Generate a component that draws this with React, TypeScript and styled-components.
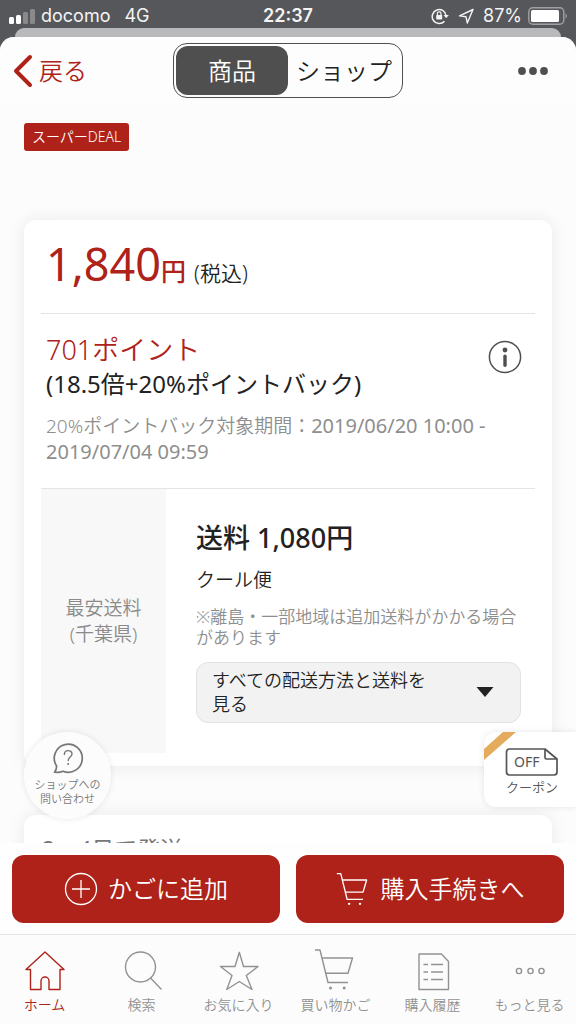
import React, { useState } from "react";
import styled, { createGlobalStyle } from "styled-components";

const red = "#ae2219";
const charcoal = "#4f4f4f";
const line = "#e4e4e4";

const GlobalStyle = createGlobalStyle`
  *, *::before, *::after { box-sizing: border-box; }
  body {
    margin: 0;
    background: #56575b;
    color: #222;
    font-family: "Noto Sans", "Noto Sans CJK JP", sans-serif;
    font-weight: 350;
  }
  button { font: inherit; color: inherit; border: 0; margin: 0; padding: 0; background: none; cursor: pointer; }
  a { color: inherit; text-decoration: none; }
  p, h1, h2 { margin: 0; font-weight: inherit; font-size: inherit; }
  svg { display: block; flex: none; }
`;

const Shell = styled.div`
  height: 100vh;
  display: flex;
  flex-direction: column;
`;

const StatusBar = styled.div`
  height: 28px;
  flex: none;
  display: grid;
  grid-template-columns: 1fr auto 1fr;
  align-items: center;
  padding: 4px 8px 0;
  color: #f4f4f4;
  font-family: Inter, sans-serif;
  font-size: 18px;
  font-weight: 400;
  line-height: 24px;
`;

const StatusGroup = styled.div<{ $end?: boolean }>`
  display: flex;
  align-items: center;
  gap: 6px;
  justify-content: ${(p) => (p.$end ? "flex-end" : "flex-start")};
`;

const Network = styled.span`
  margin-left: 8px;
`;

const Clock = styled.span`
  font-weight: 600;
`;

const BackSheet = styled.div`
  height: 9px;
  flex: none;
  margin: 0 15px;
  border-radius: 12px 12px 0 0;
  background: #b9b9bb;
`;

const Sheet = styled.div`
  flex: 1;
  min-height: 0;
  display: flex;
  flex-direction: column;
  border-radius: 14px 14px 0 0;
  background: #fcfcfc;
  overflow: hidden;
`;

const Header = styled.header`
  flex: none;
  display: grid;
  grid-template-columns: 1fr auto 1fr;
  align-items: center;
  height: 67px;
  padding: 0 13px;
  background: #fdfdfd;
`;

const BackButton = styled.button`
  display: flex;
  align-items: center;
  gap: 6px;
  justify-self: start;
  color: ${red};
  font-size: 24px;
  line-height: 36px;
`;

const Segments = styled.div`
  display: flex;
  height: 55px;
  padding: 2px;
  border: 1px solid ${charcoal};
  border-radius: 14px;
`;

const Segment = styled.button<{ $active: boolean }>`
  width: 112px;
  border-radius: 12px;
  font-size: 24px;
  line-height: 36px;
  white-space: nowrap;
  background: ${(p) => (p.$active ? charcoal : "transparent")};
  color: ${(p) => (p.$active ? "#fff" : "#222")};
`;

const MoreButton = styled.button`
  justify-self: end;
  padding: 12px 15px;
`;

const Stage = styled.div`
  position: relative;
  flex: 1;
  min-height: 0;
`;

const Scroller = styled.main`
  height: 100%;
  overflow-y: auto;
  scrollbar-width: none;
  padding: 19px 24px 0;
`;

const Tag = styled.a`
  display: inline-block;
  vertical-align: top;
  padding: 2px 8px;
  border-radius: 3px;
  background: ${red};
  color: #fff;
  font-size: 14px;
  line-height: 24px;
`;

const Card = styled.section`
  border-radius: 12px;
  background: #fff;
  box-shadow: 0 0 18px rgba(0, 0, 0, 0.08);
`;

const ProductCard = styled(Card)`
  margin-top: 69px;
  padding: 0 17px 13px;
`;

const PriceRow = styled.div`
  display: flex;
  align-items: baseline;
  padding: 14px 5px 19px;
  line-height: 24px;
  color: ${red};
`;

const Price = styled.strong`
  font-size: 45px;
  font-weight: 400;
  line-height: 60px;
`;

const Yen = styled.span`
  font-size: 25px;
  font-weight: 500;
`;

const TaxNote = styled.span`
  margin-left: 8px;
  color: #222;
  font-size: 21px;
`;

const PointsRow = styled.div`
  display: flex;
  justify-content: space-between;
  align-items: flex-start;
  padding: 19px 13px 23px 5px;
  border-top: 1px solid ${line};
`;

const Points = styled.p`
  color: ${red};
  font-size: 27px;
  line-height: 34px;
`;

const Rate = styled.p`
  font-size: 24px;
  font-weight: 400;
  line-height: 34px;
`;

const Period = styled.p`
  margin-top: 12px;
  color: #8e8e8e;
  font-size: 19px;
  line-height: 25px;
`;

const PeriodDate = styled.span`
  font-size: 20px;
  font-weight: 400;
`;

const InfoButton = styled.button`
  margin-top: 7px;
`;

const Delivery = styled.div`
  display: flex;
  border-top: 1px solid ${line};
`;

const DeliveryLabel = styled.h2`
  flex: none;
  width: 125px;
  display: flex;
  align-items: center;
  justify-content: center;
  text-align: center;
  background: #f8f8f8;
  color: #8a8a8a;
  font-size: 19px;
  line-height: 26px;
`;

const DeliveryBody = styled.div`
  flex: 1;
  padding: 31px 14px 30px 30px;
`;

const Shipping = styled.p`
  font-size: 27px;
  font-weight: 500;
  line-height: 36px;
`;

const Method = styled.p`
  margin-top: 10px;
  font-size: 19px;
  line-height: 28px;
`;

const Caution = styled.p`
  margin-top: 12px;
  color: #8e8e8e;
  font-size: 17px;
  line-height: 21px;
`;

const MethodsButton = styled.button`
  display: flex;
  align-items: center;
  justify-content: space-between;
  gap: 32px;
  width: 100%;
  margin-top: 14px;
  padding: 5px 26px 6px 15px;
  border: 1px solid #e2e2e2;
  border-radius: 12px;
  background: #f2f2f2;
  text-align: left;
  font-size: 18px;
  line-height: 24px;
`;

const ScheduleCard = styled(Card)`
  margin-top: 49px;
  padding: 18px;
  color: #777;
  font-size: 23px;
  font-weight: 400;
  line-height: 32px;
`;

const AskButton = styled.button`
  position: absolute;
  left: 24px;
  bottom: 24px;
  width: 87px;
  height: 87px;
  display: flex;
  flex-direction: column;
  align-items: center;
  padding-top: 10px;
  border-radius: 50%;
  background: rgba(252, 252, 252, 0.97);
  box-shadow: 0 0 6px rgba(0, 0, 0, 0.1);
  color: #777;
  font-size: 11px;
  line-height: 14px;
  white-space: nowrap;
`;

const AskText = styled.span`
  margin-top: 4px;
`;

const CouponButton = styled.button`
  position: absolute;
  right: 0;
  bottom: 36px;
  width: 92px;
  height: 75px;
  display: flex;
  flex-direction: column;
  align-items: flex-start;
  border-radius: 12px 0 0 12px;
  background: #fff;
  box-shadow: 0 0 6px rgba(0, 0, 0, 0.1);
  overflow: hidden;
  color: #555;
  font-size: 13px;
  line-height: 20px;
`;

const CouponText = styled.span`
  padding-left: 22px;
`;

const Actions = styled.div`
  flex: none;
  display: flex;
  gap: 16px;
  padding: 12px 12px 11px;
  background: #fefefe;
`;

const ActionButton = styled.button`
  flex: 1;
  height: 68px;
  display: flex;
  align-items: center;
  justify-content: center;
  gap: 10px;
  border-radius: 12px;
  background: ${red};
  color: #fff;
  font-size: 24px;
  line-height: 36px;
`;

const TabBar = styled.nav`
  flex: none;
  border-top: 1px solid ${line};
  background: #fcfcfc;
`;

const TabList = styled.div`
  display: flex;
  height: 89px;
  margin: 0 -2px 0 -4px;
  padding-top: 13px;
`;

const Tab = styled.a<{ $active?: boolean }>`
  flex: 1 1 0;
  display: flex;
  flex-direction: column;
  align-items: center;
  gap: 3px;
  color: ${(p) => (p.$active ? red : "#929292")};
  font-size: 14px;
  line-height: 20px;
  white-space: nowrap;
`;

const Glyph = ({ size = 44, children }: { size?: number; children: React.ReactNode }) => (
  <svg width={size} height={size} viewBox="0 0 44 44" fill="none" stroke="currentColor" strokeWidth={size < 44 ? 1.7 : 1.4} strokeLinejoin="round" aria-hidden="true">
    {children}
  </svg>
);

const HomeShape = <path d="M22 4 41 21.5H37V41.5H26V33a4 4 0 0 0-8 0V41.5H7.5V21.5H3Z" />;
const SearchShape = (
  <>
    <circle cx="20.5" cy="19" r="15" />
    <path d="m30.5 30 11 11.5" />
  </>
);
const StarShape = <path d="M22.3 4.3 26.5 18.5H41L29.3 27.5 35 41.5 22.3 33.5 9.8 41.5 15 27.5 3.5 18.5H18Z" />;
const CartShape = (
  <>
    <path d="M1 2H6L14 34.5H34" />
    <path d="M8.2 10H38.5L34 25.3H12" />
    <circle cx="16.5" cy="40" r="1.5" fill="currentColor" stroke="none" />
    <circle cx="30.2" cy="40" r="1.5" fill="currentColor" stroke="none" />
  </>
);
const HistoryShape = (
  <>
    <path d="M8 6H30.5L37.5 13.5V41.5H8Z" />
    <path d="M12.5 16.5h4.5M20 16.5h12M12.5 24h4.5M20 24h12M12.5 31.5h4.5M20 31.5h12" />
  </>
);
const DotsShape = (
  <>
    <circle cx="11" cy="23" r="2.6" />
    <circle cx="22.5" cy="23" r="2.6" />
    <circle cx="33.5" cy="23" r="2.6" />
  </>
);

const tabs = [
  { label: "ホーム", shape: HomeShape, active: true },
  { label: "検索", shape: SearchShape },
  { label: "お気に入り", shape: StarShape },
  { label: "買い物かご", shape: CartShape },
  { label: "購入履歴", shape: HistoryShape },
  { label: "もっと見る", shape: DotsShape },
];

export default function App() {
  const [view, setView] = useState("商品");

  return (
    <>
      <GlobalStyle />
      <Shell>
        <StatusBar>
          <StatusGroup>
            <svg width="27" height="16" viewBox="0 0 27 16" fill="#fff" aria-hidden="true">
              <rect x="1" y="9" width="5" height="7" rx="1.5" />
              <rect x="8" y="7" width="5" height="9" rx="1.5" />
              <rect x="15" y="4" width="5" height="12" rx="1.5" opacity=".3" />
              <rect x="22" y="1" width="5" height="15" rx="1.5" opacity=".3" />
            </svg>
            <span>docomo</span>
            <Network>4G</Network>
          </StatusGroup>
          <Clock>22:37</Clock>
          <StatusGroup $end>
            <svg width="18" height="18" viewBox="0 0 18 18" fill="none" stroke="#f4f4f4" strokeWidth="1.5" aria-hidden="true">
              <path d="M13.5 14.2A7 7 0 1 1 15.2 9" />
              <path d="M12.6 8h5.2l-2.6 3.2Z" fill="#f4f4f4" stroke="none" />
              <rect x="5.2" y="8" width="6" height="4.6" rx=".8" fill="#f4f4f4" stroke="none" />
              <path d="M6.4 8.4V6.6a1.8 1.8 0 0 1 3.6 0v1.8" strokeWidth="1.2" />
            </svg>
            <svg width="22" height="18" viewBox="0 0 22 18" fill="none" stroke="#f4f4f4" strokeWidth="1.4" strokeLinejoin="round" aria-hidden="true">
              <path d="M18 2.5 4.5 8.9 11 9.8 12.3 16Z" />
            </svg>
            <span>87%</span>
            <svg width="40" height="18" viewBox="0 0 40 18" aria-hidden="true">
              <rect x=".8" y=".8" width="35" height="16.4" rx="4" fill="none" stroke="#a0a1a4" strokeWidth="1.4" />
              <rect x="3" y="3" width="28" height="12" rx="1.5" fill="#fff" />
              <path d="M37.5 6.5v5a3 3 0 0 0 0-5Z" fill="#a0a1a4" />
            </svg>
          </StatusGroup>
        </StatusBar>
        <BackSheet />
        <Sheet>
          <Header>
            <BackButton type="button">
              <svg width="20" height="34" viewBox="0 0 20 34" fill="none" stroke="currentColor" strokeWidth="4" strokeLinecap="round" strokeLinejoin="round" aria-hidden="true">
                <path d="M17 3 3 17 17 31" />
              </svg>
              戻る
            </BackButton>
            <Segments>
              {["商品", "ショップ"].map((name) => (
                <Segment key={name} type="button" $active={view === name} aria-pressed={view === name} onClick={() => setView(name)}>
                  {name}
                </Segment>
              ))}
            </Segments>
            <MoreButton type="button" aria-label="メニュー">
              <svg width="30" height="10" viewBox="0 0 30 10" fill={charcoal}>
                <circle cx="4" cy="5" r="3.9" />
                <circle cx="15" cy="5" r="3.9" />
                <circle cx="26" cy="5" r="3.9" />
              </svg>
            </MoreButton>
          </Header>

          <Stage>
            <Scroller>
              <Tag href="#deal">スーパーDEAL</Tag>

              <ProductCard>
                <PriceRow>
                  <Price>1,840</Price>
                  <Yen>円</Yen>
                  <TaxNote>(税込)</TaxNote>
                </PriceRow>
                <PointsRow>
                  <div>
                    <Points>701ポイント</Points>
                    <Rate>(18.5倍+20%ポイントバック)</Rate>
                    <Period>
                      20%ポイントバック対象期間：<PeriodDate>2019/06/20 10:00 -</PeriodDate>
                      <br />
                      <PeriodDate>2019/07/04 09:59</PeriodDate>
                    </Period>
                  </div>
                  <InfoButton type="button" aria-label="ポイントの詳細">
                    <svg width="34" height="34" viewBox="0 0 34 34" fill="none" stroke={charcoal}>
                      <circle cx="17" cy="17" r="15.6" strokeWidth="1.5" />
                      <circle cx="17" cy="10" r="2.4" fill={charcoal} stroke="none" />
                      <path d="M17 16.2v9" strokeWidth="3.4" strokeLinecap="round" />
                    </svg>
                  </InfoButton>
                </PointsRow>
                <Delivery>
                  <DeliveryLabel>
                    最安送料
                    <br />
                    (千葉県)
                  </DeliveryLabel>
                  <DeliveryBody>
                    <Shipping>送料 1,080円</Shipping>
                    <Method>クール便</Method>
                    <Caution>※離島・一部地域は追加送料がかかる場合があります</Caution>
                    <MethodsButton type="button" aria-expanded="false">
                      <span>すべての配送方法と送料を見る</span>
                      <svg width="18" height="10" viewBox="0 0 18 10" fill="#222" aria-hidden="true">
                        <path d="M.5 0h17L9 10Z" />
                      </svg>
                    </MethodsButton>
                  </DeliveryBody>
                </Delivery>
              </ProductCard>

              <ScheduleCard>2〜4日で発送</ScheduleCard>
            </Scroller>

            <AskButton type="button">
              <svg width="32" height="32" viewBox="0 0 32 32" fill="none" stroke="currentColor" strokeLinejoin="round" strokeLinecap="round" aria-hidden="true">
                <path d="M4.5 23.8A14 14 0 1 1 11 29.2C8 30.6 5 30.4 2.5 30.2 4 28.4 4.8 26.6 4.5 23.8Z" strokeWidth="1.7" />
                <path d="M12.4 12.4c0-5 7.6-5 7.6-.4 0 3.2-3.8 3-3.8 6.6" strokeWidth="1.4" />
                <circle cx="16.2" cy="22" r="1" fill="currentColor" stroke="none" />
              </svg>
              <AskText>
                ショップへの
                <br />
                問い合わせ
              </AskText>
            </AskButton>

            <CouponButton type="button">
              <svg width="92" height="45" viewBox="0 0 92 45" fill="none" aria-hidden="true">
                <path d="M19 0H32L0 28V17Z" fill="#e3ab5b" />
                <path d="M25.5 17H61L73 27V40a3 3 0 0 1-3 3H25.5a3 3 0 0 1-3-3V20a3 3 0 0 1 3-3Z" stroke="#555" strokeWidth="1.7" strokeLinejoin="round" />
                <path d="M61 17v8.5a1.5 1.5 0 0 0 1.5 1.5H73" stroke="#555" strokeWidth="1.7" strokeLinejoin="round" />
                <text x="30" y="35" fontSize="14" fontWeight="400" fill="#555">OFF</text>
              </svg>
              <CouponText>クーポン</CouponText>
            </CouponButton>
          </Stage>

          <Actions>
            <ActionButton type="button">
              <svg width="34" height="34" viewBox="0 0 34 34" fill="none" stroke="#fff" strokeWidth="1.3" aria-hidden="true">
                <circle cx="17" cy="17" r="15.5" />
                <path d="M8 17h18M17 8v18" />
              </svg>
              かごに追加
            </ActionButton>
            <ActionButton type="button">
              <Glyph size={35}>{CartShape}</Glyph>
              購入手続きへ
            </ActionButton>
          </Actions>

          <TabBar>
            <TabList>
              {tabs.map((t) => (
                <Tab key={t.label} href="#" $active={t.active} aria-current={t.active ? "page" : undefined}>
                  <Glyph>{t.shape}</Glyph>
                  {t.label}
                </Tab>
              ))}
            </TabList>
          </TabBar>
        </Sheet>
      </Shell>
    </>
  );
}
